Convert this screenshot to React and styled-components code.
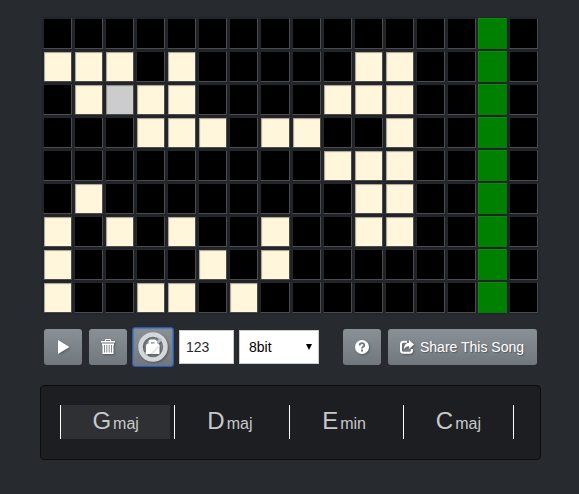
import React, { useState } from "react";
import styled, { createGlobalStyle } from "styled-components";

const GlobalStyle = createGlobalStyle`
  *, *::before, *::after { box-sizing: border-box; }
  body {
    margin: 0;
    background: #272b30;
    color: #c8c8c8;
    font: 14px/20px "Liberation Sans", Arial, sans-serif;
  }
`;

const Page = styled.main`
  min-height: 100vh;
  padding: 18px 38px 34px 40px;
  border-bottom: 1px solid #1c1e22;
`;

const Sequencer = styled.div`
  display: grid;
  grid-template-columns: repeat(16, 1fr);
  grid-auto-rows: 31px;
  gap: 2px;
  padding: 0 3px;
`;

const fills = { off: "#000", on: "#fff6dc", hover: "#ccc", playing: "#008000" };

const Step = styled.button`
  min-width: 0;
  padding: 0;
  border: 1px solid;
  border-color: ${({ $state }) =>
    $state === "playing" ? "#0c8c0c #087a08 #087a08 #0c8c0c" : "#24272a #4c4c4c #4c4c4c #24272a"};
  border-radius: 0;
  background: ${({ $state }) => fills[$state]};
  box-shadow: ${({ $state }) =>
    $state === "playing"
      ? "0 0 2px rgba(0, 0, 0, 0.4)"
      : "inset 1px 1px 1px rgba(0, 0, 0, 0.35), 0 0 2px rgba(0, 0, 0, 0.4)"};
  cursor: pointer;
`;

const Toolbar = styled.div`
  display: flex;
  align-items: center;
  justify-content: space-between;
  margin-top: 14px;
  padding: 0 4px;
`;

const ToolGroup = styled.div`
  display: flex;
  align-items: center;
  gap: ${({ $gap }) => $gap}px;
`;

const Button = styled.button`
  display: inline-flex;
  align-items: center;
  justify-content: center;
  gap: 6px;
  height: 36px;
  min-width: 38px;
  padding: 0 12px;
  border: 0;
  border-radius: 3px;
  background: linear-gradient(#8a9196, #7a8288 60%, #70787d);
  color: #fff;
  font: inherit;
  text-shadow: 1px 1px 1px rgba(0, 0, 0, 0.3);
  white-space: nowrap;
  cursor: pointer;
  svg { flex: none; filter: drop-shadow(1px 1px 1px rgba(0, 0, 0, 0.3)); }
`;

const ShareButton = styled(Button)`
  padding-right: 13px;
`;

const LockButton = styled(Button)`
  width: 42px;
  height: 40px;
  padding: 0;
  border: 1px solid #2f5aa5;
  box-shadow: inset 0 0 1px 1px #5577ad;
`;

const fieldHeight = "34px";

const TempoInput = styled.input`
  width: 55px;
  height: ${fieldHeight};
  padding: 0 6px;
  border: 1px solid #ccc;
  border-radius: 0;
  background: #fff;
  color: #272b30;
  font: inherit;
`;

const SelectBox = styled.span`
  display: grid;
  align-items: center;
  > * { grid-area: 1 / 1; }
  svg { justify-self: end; margin-right: 6px; pointer-events: none; }
`;

const SoundSelect = styled.select`
  width: 80px;
  height: ${fieldHeight};
  padding: 0 9px;
  border: 1px solid #ccc;
  border-radius: 0;
  background: #fff;
  color: #000;
  font: inherit;
  appearance: none;
`;

const ChordPanel = styled.section`
  display: flex;
  gap: 4px;
  margin-top: 18px;
  padding: 19px 26px 20px 19px;
  border: 1px solid #0c0d0e;
  border-radius: 4px;
  background: #1c1e22;
  box-shadow: inset 0 1px 1px rgba(0, 0, 0, 0.05);
`;

const Chord = styled.button`
  flex: 1 1 0;
  height: 34px;
  padding: 0;
  border: 0;
  border-left: 1px solid #fff;
  background: ${({ $active }) => ($active ? "#2e3033" : "transparent")};
  color: #c8c8c8;
  font: 24px/32px "Liberation Sans", Arial, sans-serif;
  cursor: pointer;
  &:last-child { border-right: 1px solid #fff; }
  small { margin-left: 2px; font-size: 16px; }
`;

const ROWS = [
  "................",
  "###.#.....##....",
  ".#h##....###....",
  "...###.##..#....",
  ".........###....",
  ".#........##....",
  "#.#.#..#..##....",
  "#....#.#........",
  "#..##.#.........",
];
const PLAYHEAD = 14;

const CHORDS = [
  ["G", "maj"],
  ["D", "maj"],
  ["E", "min"],
  ["C", "maj"],
];

const PlayIcon = () => (
  <svg width="14" height="14" viewBox="0 0 14 14" fill="#fff" aria-hidden="true">
    <path d="M2 0v14L13.500 7z" />
  </svg>
);

const TrashIcon = () => (
  <svg width="14" height="18" viewBox="0 0 14 18" aria-hidden="true">
    <path d="M4.500 3V1.500h5V3" fill="none" stroke="#fff" />
    <path d="M0 3h14v1.500H0z" fill="#fff" />
    <path d="M1 5.500h12v1.500h-.5v9h-11V7H1z" fill="#fff" />
    <path d="M3.500 7v7.500M5.800 7v7.500M8.200 7v7.500M10.500 7v7.500" stroke="#848b90" />
  </svg>
);

const UnlockedIcon = () => (
  <svg width="32" height="32" viewBox="0 0 32 32" aria-hidden="true">
    <circle cx="16" cy="16" r="12.500" fill="none" stroke="#d5d7d9" strokeWidth="4.500" />
    <path d="M8 24L24 8" stroke="#b9bdc0" strokeWidth="3" />
    <path d="M9 15q0-2.500 2.500-2.500V11q0-2.500 2.500-2.500h3.500q2 0 2.500 2v2q2.500 0 2.500 2.500v8H9z" fill="#fff" />
    <path d="M14 12.500V11.300h3.500v1.200z" fill="#7a8288" />
    <path d="M13 23L22.500 13.500v2.500L15.500 23z" fill="#e2e4e5" />
  </svg>
);

const HelpIcon = () => (
  <svg width="14" height="14" viewBox="0 0 14 14" aria-hidden="true">
    <circle cx="7" cy="7" r="7" fill="#fff" />
    <path d="M4.700 5.500C4.700 2.500 9.300 2.500 9.300 5.200C9.300 6.800 7 6.700 7 8.600" fill="none" stroke="#6d757a" strokeWidth="1.800" />
    <path d="M6 9.600h2v1.900H6z" fill="#6d757a" />
  </svg>
);

const ShareIcon = () => (
  <svg width="14" height="14" viewBox="0 0 14 14" aria-hidden="true">
    <path d="M7 1.700H3.500Q1 1.700 1 4.200v6Q1 12.800 3.500 12.800h6Q12 12.800 12 10.300V9" fill="none" stroke="#fff" strokeWidth="2" />
    <path d="M9 0l5 4.500L9 9V6.300Q5.500 6.300 4 9.300Q4 3 9 2.700z" fill="#fff" />
  </svg>
);

const stepState = (mark, column) => {
  if (column === PLAYHEAD) return "playing";
  if (mark === "h") return "hover";
  return mark === "#" ? "on" : "off";
};

export default function App() {
  const [rows, setRows] = useState(ROWS);
  const [activeChord, setActiveChord] = useState(0);

  const toggle = (r, c) =>
    setRows((current) =>
      current.map((row, i) =>
        i === r ? row.slice(0, c) + (row[c] === "#" ? "." : "#") + row.slice(c + 1) : row
      )
    );

  return (
    <>
      <GlobalStyle />
      <Page>
        <Sequencer role="group" aria-label="Step sequencer">
          {rows.map((row, r) =>
            [...row].map((mark, c) => (
              <Step
                key={`${r}-${c}`}
                $state={stepState(mark, c)}
                aria-label={`Row ${r + 1}, step ${c + 1}`}
                aria-pressed={mark === "#"}
                onClick={() => toggle(r, c)}
              />
            ))
          )}
        </Sequencer>
        <Toolbar>
          <ToolGroup $gap={5}>
            <ToolGroup $gap={7}>
              <Button aria-label="Play"><PlayIcon /></Button>
              <Button aria-label="Clear"><TrashIcon /></Button>
            </ToolGroup>
            <LockButton aria-label="Lock tempo"><UnlockedIcon /></LockButton>
            <TempoInput aria-label="Tempo" defaultValue="123" />
            <SelectBox>
              <SoundSelect aria-label="Sound" defaultValue="8bit">
                <option>8bit</option>
              </SoundSelect>
              <svg width="8" height="6" viewBox="0 0 8 6" aria-hidden="true">
                <path d="M1 0h6L4 6z" fill="#000" />
              </svg>
            </SelectBox>
          </ToolGroup>
          <ToolGroup $gap={7}>
            <Button aria-label="Help"><HelpIcon /></Button>
            <ShareButton><ShareIcon />Share This Song</ShareButton>
          </ToolGroup>
        </Toolbar>
        <ChordPanel aria-label="Chords">
          {CHORDS.map(([root, quality], i) => (
            <Chord key={root} $active={i === activeChord} onClick={() => setActiveChord(i)}>
              {root}<small>{quality}</small>
            </Chord>
          ))}
        </ChordPanel>
      </Page>
    </>
  );
}
